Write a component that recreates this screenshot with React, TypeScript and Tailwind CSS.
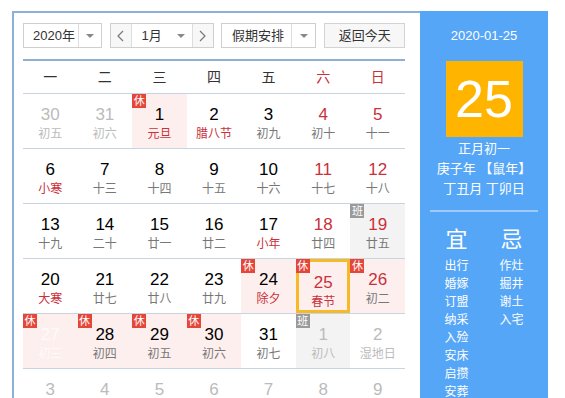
import React from 'react';

type Cell = {
  d: number;
  l: string;
  other?: boolean;
  wk?: boolean;
  fest?: boolean;
  badge?: '休' | '班';
  bg?: 'pink' | 'gray';
  sel?: boolean;
  faded?: boolean;
};

const rows: Cell[][] = [
  [
    { d: 30, l: '初五', other: true },
    { d: 31, l: '初六', other: true },
    { d: 1, l: '元旦', fest: true, badge: '休', bg: 'pink' },
    { d: 2, l: '腊八节', fest: true },
    { d: 3, l: '初九' },
    { d: 4, l: '初十', wk: true },
    { d: 5, l: '十一', wk: true },
  ],
  [
    { d: 6, l: '小寒', fest: true },
    { d: 7, l: '十三' },
    { d: 8, l: '十四' },
    { d: 9, l: '十五' },
    { d: 10, l: '十六' },
    { d: 11, l: '十七', wk: true },
    { d: 12, l: '十八', wk: true },
  ],
  [
    { d: 13, l: '十九' },
    { d: 14, l: '二十' },
    { d: 15, l: '廿一' },
    { d: 16, l: '廿二' },
    { d: 17, l: '小年', fest: true },
    { d: 18, l: '廿四', wk: true },
    { d: 19, l: '廿五', wk: true, badge: '班', bg: 'gray' },
  ],
  [
    { d: 20, l: '大寒', fest: true },
    { d: 21, l: '廿七' },
    { d: 22, l: '廿八' },
    { d: 23, l: '廿九' },
    { d: 24, l: '除夕', fest: true, badge: '休', bg: 'pink' },
    { d: 25, l: '春节', fest: true, wk: true, badge: '休', bg: 'pink', sel: true },
    { d: 26, l: '初二', wk: true, badge: '休', bg: 'pink' },
  ],
  [
    { d: 27, l: '初三', badge: '休', bg: 'pink', faded: true },
    { d: 28, l: '初四', badge: '休', bg: 'pink' },
    { d: 29, l: '初五', badge: '休', bg: 'pink' },
    { d: 30, l: '初六', badge: '休', bg: 'pink' },
    { d: 31, l: '初七' },
    { d: 1, l: '初八', other: true, badge: '班', bg: 'gray' },
    { d: 2, l: '湿地日', other: true },
  ],
  [
    { d: 3, l: '初十', other: true },
    { d: 4, l: '立春', other: true },
    { d: 5, l: '十二', other: true },
    { d: 6, l: '十三', other: true },
    { d: 7, l: '十四', other: true },
    { d: 8, l: '元宵节', other: true },
    { d: 9, l: '十六', other: true },
  ],
];

const weekdays = ['一', '二', '三', '四', '五', '六', '日'];
const yi = ['出行', '婚嫁', '订盟', '纳采', '入殓', '安床', '启攒', '安葬'];
const ji = ['作灶', '掘井', '谢土', '入宅'];

const Caret = () => (
  <span className="block w-0 h-0 border-l-[4px] border-r-[4px] border-t-[4px] border-l-transparent border-r-transparent border-t-[#888]" />
);

const Chevron = ({ dir }: { dir: 'l' | 'r' }) => (
  <svg width="7" height="12" viewBox="0 0 7 12" fill="none" stroke="#777" strokeWidth="1.2">
    <path d={dir === 'l' ? 'M6 1L1 6l5 5' : 'M1 1l5 5-5 5'} />
  </svg>
);

function DayCell({ c }: { c: Cell }) {
  const bg = c.bg === 'pink' ? 'bg-[#fdefee]' : c.bg === 'gray' ? 'bg-[#f3f3f3]' : '';
  let num = 'text-[#000]';
  if (c.other) num = 'text-[#bbb]';
  else if (c.wk) num = 'text-[#c9303a]';
  let lun = 'text-[#777]';
  if (c.other) lun = 'text-[#bbb]';
  else if (c.fest) lun = 'text-[#c9303a]';
  if (c.faded) {
    num = 'text-[#fff]/70';
    lun = 'text-[#fff]/70';
  }
  return (
    <div className="border-t border-[#c9d4e2] h-[55px]">
      <div className={`relative h-full flex flex-col items-center pt-[11px] ${bg} ${c.sel ? 'border-[3px] border-[#f6b928] pt-[8px]' : ''}`}>
        {c.badge && (
          <span
            className={`absolute ${c.sel ? '-top-[3px] -left-[3px]' : 'top-0 left-0'} w-[14px] h-[14px] flex items-center justify-center text-[11px] leading-none text-white ${c.badge === '休' ? 'bg-[#e5463a]' : 'bg-[#9a9a9a]'}`}
          >
            {c.badge}
          </span>
        )}
        <span className={`text-[17px] leading-[20px] ${num}`}>{c.d}</span>
        <span className={`text-[12px] leading-[16px] mt-[1px] ${lun}`}>{c.l}</span>
      </div>
    </div>
  );
}

export default function App() {
  return (
    <div
      className="w-[565px] h-[398px] overflow-hidden bg-white pt-[11px] pl-[12px]"
      style={{ fontFamily: '"Liberation Sans", "Noto Sans CJK SC", sans-serif' }}
    >
      <div className="flex h-[400px]">
        <div className="w-[408px] border-l-2 border-t-2 border-[#8db0d8] pl-[9px] pr-[15px] pt-[10px]">
          <div className="flex items-center h-[25px] text-[13px] text-[#333]">
            <div className="w-[79px] h-full flex border border-[#cfcfcf]">
              <span className="flex-1 flex items-center pl-[9px]">2020年</span>
              <span className="w-[23px] border-l border-[#ddd] flex items-center justify-center">
                <Caret />
              </span>
            </div>
            <div className="ml-[8px] w-[105px] h-full flex border border-[#cfcfcf]">
              <span className="w-[21px] flex items-center justify-center bg-[#f7f7f7] border-r border-[#ddd]">
                <Chevron dir="l" />
              </span>
              <span className="flex-1 flex items-center pl-[10px]">1月</span>
              <span className="w-[22px] flex items-center justify-center">
                <Caret />
              </span>
              <span className="w-[21px] flex items-center justify-center bg-[#f7f7f7] border-l border-[#ddd]">
                <Chevron dir="r" />
              </span>
            </div>
            <div className="ml-[7px] w-[96px] h-full flex border border-[#cfcfcf]">
              <span className="flex-1 flex items-center pl-[10px]">假期安排</span>
              <span className="w-[24px] border-l border-[#ddd] flex items-center justify-center">
                <Caret />
              </span>
            </div>
            <div className="ml-[8px] w-[81px] h-full flex items-center justify-center border border-[#d3d3d3] bg-[#f7f7f7]">
              返回今天
            </div>
          </div>

          <div className="mt-[11px] border-t-2 border-[#8fb0d6] grid grid-cols-7 h-[34px] items-center text-[14px]">
            {weekdays.map((w, i) => (
              <span key={w} className={`text-center ${i >= 5 ? 'text-[#c9303a]' : 'text-[#333]'}`}>
                {w}
              </span>
            ))}
          </div>

          <div className="grid grid-cols-7">
            {rows.flat().map((c, i) => (
              <DayCell key={i} c={c} />
            ))}
          </div>
        </div>

        <div className="w-[128px] bg-[#56a6f7] flex flex-col items-center text-white">
          <span className="mt-[17px] text-[13px] leading-[16px]">2020-01-25</span>
          <div className="mt-[17px] w-[77px] h-[76px] bg-[#ffb500] flex items-center justify-center text-[52px] leading-none">
            25
          </div>
          <span className="mt-[2px] text-[13px] leading-[20px]">正月初一</span>
          <span className="text-[13px] leading-[20px]">庚子年 【鼠年】</span>
          <span className="text-[13px] leading-[20px]">丁丑月 丁卯日</span>
          <div className="mt-[11px] w-[108px] h-[2px] bg-[#9dcbfa]" />
          <div className="flex gap-[15px] mt-[15px]">
            <div className="w-[40px] flex flex-col items-center">
              <span className="text-[22px] leading-[26px]">宜</span>
              <div className="mt-[4px] flex flex-col items-center text-[12px] leading-[18px]">
                {yi.map((t) => (
                  <span key={t}>{t}</span>
                ))}
              </div>
            </div>
            <div className="w-[40px] flex flex-col items-center">
              <span className="text-[22px] leading-[26px]">忌</span>
              <div className="mt-[4px] flex flex-col items-center text-[12px] leading-[18px]">
                {ji.map((t) => (
                  <span key={t}>{t}</span>
                ))}
              </div>
            </div>
          </div>
        </div>
      </div>
    </div>
  );
}
